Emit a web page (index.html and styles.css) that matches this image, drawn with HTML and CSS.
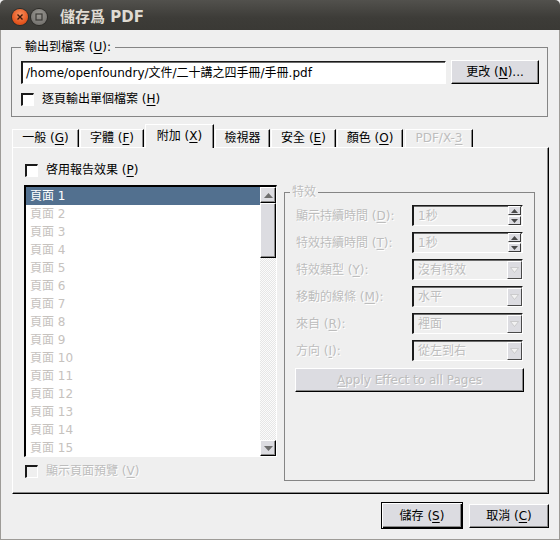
FILE: index.html
```html
<!DOCTYPE html>
<html>
<head>
<meta charset="utf-8">
<link rel="stylesheet" href="styles.css">
</head>
<body>
<div class="window">
  <div class="titlebar">
    <span class="wbtn close"><svg width="16" height="16" viewBox="0 0 16 16"><path d="M5.5 5.5 L10.5 10.5 M10.5 5.5 L5.5 10.5" stroke="#3b1a0c" stroke-width="1.4" fill="none"/></svg></span>
    <span class="wbtn max"><svg width="16" height="16" viewBox="0 0 16 16"><rect x="5" y="5" width="6" height="6" stroke="#3c3b37" stroke-width="1.2" fill="none"/></svg></span>
    <span class="title">儲存爲 PDF</span>
  </div>
  <div class="body">
    <fieldset class="group out">
      <legend>輸出到檔案 (<u>U</u>):</legend>
      <div class="filerow">
        <div class="field path">/home/openfoundry/文件/二十講之四手冊/手冊.pdf</div>
        <div class="btn change">更改 (<u>N</u>)...</div>
      </div>
      <div class="check single"><span class="box"></span><span>逐頁輸出單個檔案 (<u>H</u>)</span></div>
    </fieldset>

    <div class="tabs">
      <div class="tab t1">一般 (<u>G</u>)</div>
      <div class="tab t2">字體 (<u>F</u>)</div>
      <div class="tab t3 sel">附加 (<u>X</u>)</div>
      <div class="tab t4">檢視器</div>
      <div class="tab t5">安全 (<u>E</u>)</div>
      <div class="tab t6">顏色 (<u>O</u>)</div>
      <div class="tab t7 dis">PDF/X-<u>3</u></div>
    </div>

    <div class="pane">
      <div class="check effects"><span class="box"></span><span>啓用報告效果 (<u>P</u>)</span></div>
      <div class="cols">
        <div class="leftcol">
          <div class="list">
            <div class="items">
              <div class="item cur">頁面 1</div>
              <div class="item">頁面 2</div>
              <div class="item">頁面 3</div>
              <div class="item">頁面 4</div>
              <div class="item">頁面 5</div>
              <div class="item">頁面 6</div>
              <div class="item">頁面 7</div>
              <div class="item">頁面 8</div>
              <div class="item">頁面 9</div>
              <div class="item">頁面 10</div>
              <div class="item">頁面 11</div>
              <div class="item">頁面 12</div>
              <div class="item">頁面 13</div>
              <div class="item">頁面 14</div>
              <div class="item">頁面 15</div>
            </div>
            <div class="sb">
              <div class="sbtn"><svg width="9" height="5" viewBox="0 0 9 5"><path d="M0 5 L4.5 0 L9 5 Z" fill="#6e6e6e"/></svg></div>
              <div class="thumb"></div>
              <div class="track"></div>
              <div class="sbtn"><svg width="9" height="5" viewBox="0 0 9 5"><path d="M0 0 L9 0 L4.5 5 Z" fill="#6e6e6e"/></svg></div>
            </div>
          </div>
          <div class="check preview dis"><span class="box"></span><span>顯示頁面預覽 (<u>V</u>)</span></div>
        </div>

        <fieldset class="group fx">
          <legend>特效</legend>
          <div class="frow">
            <span class="lbl">顯示持續時間 (<u>D</u>):</span>
            <div class="sfield"><span class="val">1秒</span>
              <span class="spin">
                <span class="sp"><svg width="7" height="4" viewBox="0 0 7 4"><path d="M0 4 L3.5 0 L7 4 Z" fill="#4a4a4a"/></svg></span>
                <span class="sp"><svg width="7" height="4" viewBox="0 0 7 4"><path d="M0 0 L7 0 L3.5 4 Z" fill="#4a4a4a"/></svg></span>
              </span>
            </div>
          </div>
          <div class="frow">
            <span class="lbl">特效持續時間 (<u>T</u>):</span>
            <div class="sfield"><span class="val">1秒</span>
              <span class="spin">
                <span class="sp"><svg width="7" height="4" viewBox="0 0 7 4"><path d="M0 4 L3.5 0 L7 4 Z" fill="#4a4a4a"/></svg></span>
                <span class="sp"><svg width="7" height="4" viewBox="0 0 7 4"><path d="M0 0 L7 0 L3.5 4 Z" fill="#4a4a4a"/></svg></span>
              </span>
            </div>
          </div>
          <div class="frow">
            <span class="lbl">特效類型 (<u>Y</u>):</span>
            <div class="sfield"><span class="val">沒有特效</span>
              <span class="carrow"><svg width="9" height="6" viewBox="0 0 9 6"><path d="M0.5 0.5 L8.5 0.5 L4.5 5.5 Z" fill="#f2f2f2" stroke="#c4c4c4" stroke-width="0.8"/></svg></span>
            </div>
          </div>
          <div class="frow">
            <span class="lbl">移動的線條 (<u>M</u>):</span>
            <div class="sfield"><span class="val">水平</span>
              <span class="carrow"><svg width="9" height="6" viewBox="0 0 9 6"><path d="M0.5 0.5 L8.5 0.5 L4.5 5.5 Z" fill="#f2f2f2" stroke="#c4c4c4" stroke-width="0.8"/></svg></span>
            </div>
          </div>
          <div class="frow">
            <span class="lbl">來自 (<u>R</u>):</span>
            <div class="sfield"><span class="val">裡面</span>
              <span class="carrow"><svg width="9" height="6" viewBox="0 0 9 6"><path d="M0.5 0.5 L8.5 0.5 L4.5 5.5 Z" fill="#f2f2f2" stroke="#c4c4c4" stroke-width="0.8"/></svg></span>
            </div>
          </div>
          <div class="frow">
            <span class="lbl">方向 (<u>I</u>):</span>
            <div class="sfield"><span class="val">從左到右</span>
              <span class="carrow"><svg width="9" height="6" viewBox="0 0 9 6"><path d="M0.5 0.5 L8.5 0.5 L4.5 5.5 Z" fill="#f2f2f2" stroke="#c4c4c4" stroke-width="0.8"/></svg></span>
            </div>
          </div>
          <div class="btn apply dis"><span><u>A</u>pply Effect to all Pages</span></div>
        </fieldset>
      </div>
    </div>

    <div class="buttons">
      <div class="btn default">儲存 (<u>S</u>)</div>
      <div class="btn cancel">取消 (<u>C</u>)</div>
    </div>
  </div>
</div>
</body>
</html>
```

FILE: styles.css
```css
html, body {
  margin: 0;
  padding: 0;
  background: #efefef;
}

.window {
  width: 560px;
  height: 540px;
  display: flex;
  flex-direction: column;
  font-family: "DejaVu Sans", "Noto Sans CJK TC", sans-serif;
  font-size: 12px;
  line-height: 16px;
  color: #000;
}

u {
  text-decoration: underline;
  text-underline-offset: 2px;
}

/* ---------- title bar ---------- */
.titlebar {
  flex: none;
  height: 30px;
  box-sizing: border-box;
  background: linear-gradient(#52514d, #3d3c38 60%, #3a3935);
  border-radius: 5px 5px 0 0;
  display: flex;
  align-items: center;
  padding-left: 12px;
  padding-top: 3px;
}

.wbtn {
  width: 16px;
  height: 16px;
  border-radius: 50%;
  box-sizing: border-box;
  display: flex;
  align-items: center;
  justify-content: center;
}

.wbtn svg {
  display: block;
}

.close {
  background: radial-gradient(circle at 50% 35%, #f8905f, #e5561f 65%, #c9430f);
  box-shadow: 0 0 0 1px #2d2c29;
}

.max {
  margin-left: 3px;
  background: radial-gradient(circle at 50% 35%, #9a9893, #7b7975 65%, #66645f);
  box-shadow: 0 0 0 1px #2d2c29;
}

.title {
  margin-left: 13px;
  color: #dfdbd2;
  font-weight: bold;
  font-size: 15px;
  line-height: 18px;
}

/* ---------- body ---------- */
.body {
  flex: 1;
  background: #efefef;
  border-left: 1px solid #9d9b97;
  border-right: 1px solid #9d9b97;
  border-bottom: 1px solid #9d9b97;
  padding: 9px 0 0 10px;
}

.group {
  margin: 0;
  min-width: 0;
  box-sizing: border-box;
  border: 1px solid #858585;
}

.group legend {
  padding: 0 4px;
  line-height: 16px;
}

.out {
  width: 537px;
  padding: 5px 8px 9px 9px;
}

.filerow {
  display: flex;
  align-items: flex-end;
  height: 24px;
}

.field {
  box-sizing: border-box;
  border-style: solid;
  border-width: 1px 1px 1px 2px;
  border-color: #1a1a1a #fff #fff #1a1a1a;
  box-shadow: inset 0 1px 0 #6b6b6b;
}

.path {
  width: 425px;
  height: 23px;
  background: #fff;
  padding: 3px 0 0 3px;
  white-space: nowrap;
  overflow: hidden;
}

.btn {
  box-sizing: border-box;
  background: #dcdce1;
  border: 1px solid;
  border-color: #fff #000 #000 #fff;
  box-shadow: inset -1px -1px 0 #8a8a8a;
  display: flex;
  align-items: center;
  justify-content: center;
}

.change {
  width: 88px;
  height: 24px;
  margin-left: 5px;
}

.check {
  display: flex;
  align-items: center;
  height: 16px;
}

.box {
  width: 13px;
  height: 13px;
  box-sizing: border-box;
  border-style: solid;
  border-width: 2px 1px 1px 2px;
  border-color: #1a1a1a #fff #fff #1a1a1a;
  background: #fff;
  margin-right: 8px;
  flex: none;
}

.single {
  margin-top: 7px;
}

/* ---------- tabs ---------- */
.tabs {
  display: flex;
  align-items: flex-end;
  height: 23px;
  margin-top: 7px;
  margin-left: 1px;
  position: relative;
  z-index: 1;
}

.tab {
  box-sizing: border-box;
  height: 18px;
  margin-right: 1px;
  background: #efefef;
  border-top: 1px solid #fff;
  border-left: 1px solid #fff;
  border-right: 1px solid #000;
  box-shadow: inset -1px 0 0 #8a8a8a;
  text-align: center;
  line-height: 16px;
  white-space: nowrap;
}

.tab.sel {
  height: 24px;
  margin-bottom: -1px;
  padding-top: 3px;
}

.tab.dis {
  color: #bdbdbd;
  text-shadow: 1px 1px 0 #fff;
  margin-left: 1px;
}

.t1 { width: 67px; }
.t2 { width: 64px; }
.t3 { width: 69px; }
.t4 { width: 55px; }
.t5 { width: 65px; }
.t6 { width: 66px; }
.t7 { width: 68px; }

/* ---------- pane ---------- */
.pane {
  margin-left: 1px;
  width: 537px;
  height: 347px;
  box-sizing: border-box;
  border-top: 1px solid #fff;
  border-left: 1px solid #fff;
  border-right: 1px solid #000;
  border-bottom: 1px solid #000;
  box-shadow: inset -1px -1px 0 #8a8a8a;
  padding: 14px 0 0 11px;
}

.effects {
  margin-left: 1px;
}

.cols {
  display: flex;
  align-items: flex-start;
  margin-top: 7px;
}

.list {
  width: 253px;
  height: 272px;
  box-sizing: border-box;
  border-style: solid;
  border-width: 2px 1px 1px 2px;
  border-color: #000 #fff #fff #000;
  background: #fff;
  display: flex;
  overflow: hidden;
}

.items {
  width: 234px;
  flex: none;
  overflow: hidden;
}

.item {
  height: 18px;
  line-height: 18px;
  padding-left: 4px;
  color: #c6c2be;
  white-space: nowrap;
}

.item.cur {
  background: #52708f;
  color: #fff;
}

.sb {
  width: 16px;
  flex: none;
  display: flex;
  flex-direction: column;
}

.sbtn {
  height: 16px;
  flex: none;
  box-sizing: border-box;
  background: #dcdce1;
  border: 1px solid;
  border-color: #fff #000 #000 #fff;
  box-shadow: inset -1px -1px 0 #8a8a8a;
  display: flex;
  align-items: center;
  justify-content: center;
}

.sbtn svg {
  display: block;
}

.thumb {
  height: 55px;
  flex: none;
  box-sizing: border-box;
  background: #dcdce1;
  border: 1px solid;
  border-color: #fff #000 #000 #fff;
  box-shadow: inset -1px -1px 0 #8a8a8a;
}

.track {
  flex: 1;
  background: repeating-conic-gradient(#e6e6e6 0 25%, #fbfbfb 0 50%) 0 0 / 2px 2px;
}

.preview {
  margin-top: 6px;
  margin-left: 1px;
}

.check.dis {
  color: #bdbdbd;
  text-shadow: 1px 1px 0 #fff;
}

.check.dis .box {
  background: #efefef;
}

/* ---------- effects group ---------- */
.fx {
  width: 251px;
  height: 297px;
  margin-left: 7px;
  margin-top: -1px;
  padding: 5px 11px 0 11px;
}

.fx legend {
  padding: 0 2px;
  margin-left: -6px;
  color: #bdbdbd;
  text-shadow: 1px 1px 0 #fff;
}

.frow {
  display: flex;
  align-items: center;
  height: 21px;
  margin-bottom: 6px;
}

.lbl {
  width: 116px;
  flex: none;
  color: #bdbdbd;
  text-shadow: 1px 1px 0 #fff;
  white-space: nowrap;
}

.sfield {
  width: 111px;
  height: 21px;
  box-sizing: border-box;
  border-style: solid;
  border-width: 1px 1px 1px 2px;
  border-color: #1a1a1a #fff #fff #1a1a1a;
  box-shadow: inset 0 1px 0 #6b6b6b;
  background: #efefef;
  display: flex;
  align-items: center;
  padding: 0 0 0 4px;
}

.val {
  flex: 1;
  color: #bdbdbd;
  text-shadow: 1px 1px 0 #fff;
  white-space: nowrap;
}

.spin {
  display: flex;
  flex-direction: column;
  gap: 1px;
  margin-right: 1px;
}

.sp {
  width: 13px;
  height: 9px;
  box-sizing: border-box;
  background: #dcdce1;
  border: 1px solid;
  border-color: #fff #3a3a3a #3a3a3a #fff;
  display: flex;
  align-items: center;
  justify-content: center;
}

.sp svg {
  display: block;
}

.carrow {
  width: 15px;
  height: 18px;
  box-sizing: border-box;
  margin-right: 0;
  background: #dcdce1;
  border: 1px solid;
  border-color: #fff #4a4a4a #4a4a4a #fff;
  display: flex;
  align-items: center;
  justify-content: center;
}

.carrow svg {
  display: block;
}

.apply {
  width: 229px;
  height: 24px;
  margin-left: -1px;
  margin-top: 7px;
}

.btn.dis {
  color: #bdbdbd;
  text-shadow: 1px 1px 0 #fff;
}

/* ---------- dialog buttons ---------- */
.buttons {
  display: flex;
  align-items: center;
  justify-content: flex-end;
  margin-top: 8px;
  margin-right: 10px;
}

.default {
  width: 82px;
  height: 27px;
  border: 1px solid #000;
  box-shadow: inset 1px 1px 0 #fff, inset -1px -1px 0 #000, inset -2px -2px 0 #8a8a8a;
}

.cancel {
  width: 80px;
  height: 24px;
  margin-left: 6px;
}
```
